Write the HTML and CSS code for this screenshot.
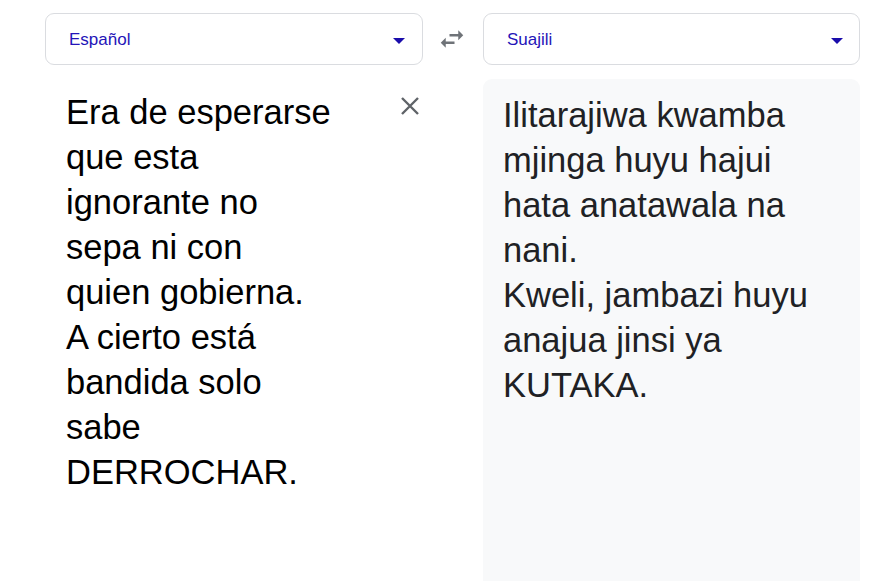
FILE: index.html
```html
<!DOCTYPE html>
<html lang="es">
<head>
<meta charset="utf-8">
<title>Traductor</title>
<link rel="stylesheet" href="styles.css">
</head>
<body>
<div class="translator">
  <div class="col col-source">
    <div class="lang-select">
      <span class="lang-name">Español</span>
      <span class="caret"></span>
    </div>
    <div class="source-area">
      <div class="text source-text">Era de esperarse<br>que esta<br>ignorante no<br>sepa ni con<br>quien gobierna.<br>A cierto está<br>bandida solo<br>sabe<br>DERROCHAR.</div>
      <button class="clear-btn" aria-label="Borrar texto">
        <svg viewBox="0 0 20 20" width="20" height="20"><path d="M2 2L18 18M18 2L2 18" stroke="#5f6368" stroke-width="2.4" fill="none"/></svg>
      </button>
    </div>
  </div>
  <div class="swap">
    <svg viewBox="0 0 24 24" width="30" height="30"><path fill="#6f7378" d="M6.99 11L3 15l3.99 4v-3H14v-2H6.99v-3zM21 9l-3.99-4v3H10v2h7.01v3L21 9z"/></svg>
  </div>
  <div class="col col-target">
    <div class="lang-select">
      <span class="lang-name">Suajili</span>
      <span class="caret"></span>
    </div>
    <div class="target-area">
      <div class="text target-text">Ilitarajiwa kwamba<br>mjinga huyu hajui<br>hata anatawala na<br>nani.<br>Kweli, jambazi huyu<br>anajua jinsi ya<br>KUTAKA.</div>
    </div>
  </div>
</div>
</body>
</html>
```
FILE: styles.css
```css
html, body {
  margin: 0;
  padding: 0;
  background: #ffffff;
}
body {
  font-family: "Liberation Sans", Arial, sans-serif;
  overflow: hidden;
  height: 581px;
}
.translator {
  display: flex;
  padding: 13px 0 0 45px;
  align-items: stretch;
}
.col {
  display: flex;
  flex-direction: column;
}
.col-source { width: 378px; }
.col-target { width: 377px; }
.swap {
  width: 60px;
  height: 51px;
  display: flex;
  align-items: center;
  justify-content: center;
}
.swap svg { display: block; margin-left: -2px; margin-top: 1px; }
.lang-select {
  box-sizing: border-box;
  height: 52px;
  border: 1px solid #dadce0;
  border-radius: 9px;
  display: flex;
  align-items: center;
  justify-content: space-between;
  padding: 0 16px 0 23px;
}
.col-source .lang-select { padding-right: 17px; }
.lang-name {
  font-size: 17px;
  color: #2414b8;
  margin-top: 1px;
}
.caret {
  width: 0;
  height: 0;
  border-left: 6px solid transparent;
  border-right: 6px solid transparent;
  border-top: 6px solid #1a0dab;
  margin-top: 3px;
}
.text {
  font-size: 34.5px;
  line-height: 45px;
}
.source-area {
  display: flex;
  justify-content: space-between;
  align-items: flex-start;
  margin-top: 14px;
  padding: 11px 0 0 21px;
}
.source-text { color: #000000; }
.clear-btn {
  background: none;
  border: 0;
  padding: 0;
  margin: 6px 3px 0 0;
  width: 20px;
  height: 20px;
  cursor: pointer;
}
.clear-btn svg { display: block; }
.target-area {
  box-sizing: border-box;
  margin-top: 14px;
  background: #f8f9fa;
  border-radius: 9px 9px 0 0;
  padding: 14px 20px 0 20px;
  height: 502px;
}
.target-text { color: #202124; }
```
